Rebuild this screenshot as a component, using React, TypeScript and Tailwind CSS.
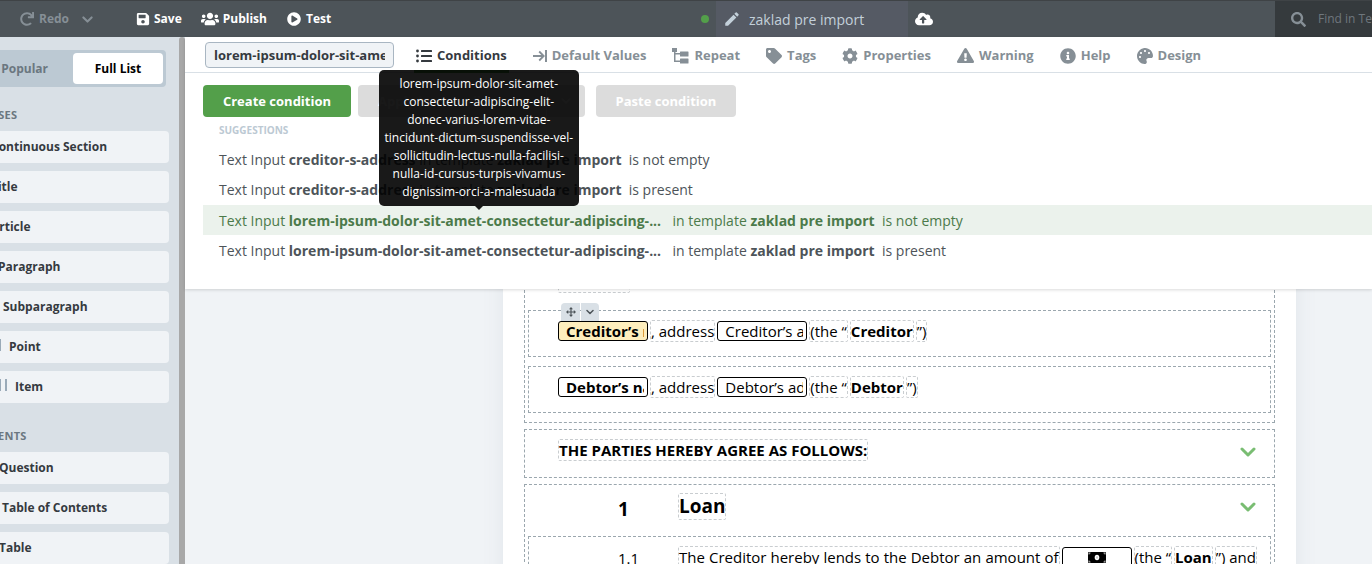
import React from "react";
import {
  FaCog,
  FaCloudUploadAlt,
  FaExclamationTriangle,
  FaInfoCircle,
  FaPalette,
  FaPlayCircle,
  FaRedo,
  FaSave,
  FaSearch,
  FaTag,
  FaUsers,
} from "react-icons/fa";
import { MdEdit } from "react-icons/md";

const VARIABLE_LINES = [
  "lorem-ipsum-dolor-sit-amet-",
  "consectetur-adipiscing-elit-",
  "donec-varius-lorem-vitae-",
  "tincidunt-dictum-suspendisse-vel-",
  "sollicitudin-lectus-nulla-facilisi-",
  "nulla-id-cursus-turpis-vivamus-",
  "dignissim-orci-a-malesuada",
];

function ListIcon() {
  return (
    <svg viewBox="0 0 16 14" className="h-[14px] w-4" fill="currentColor">
      <circle cx="1.500" cy="2" r="1.400" />
      <circle cx="1.500" cy="7" r="1.400" />
      <circle cx="1.500" cy="12" r="1.400" />
      <rect x="5" y="1" width="11" height="2" rx="0.500" />
      <rect x="5" y="6" width="11" height="2" rx="0.500" />
      <rect x="5" y="11" width="11" height="2" rx="0.500" />
    </svg>
  );
}

function DefaultIcon() {
  return (
    <svg viewBox="0 0 14 12" className="h-3 w-[14px]" fill="none" stroke="currentColor" strokeWidth="1.800">
      <path d="M0 6h10.500M6.200 1.500L10.700 6l-4.500 4.500" />
      <path d="M13 0v12" strokeWidth="2" />
    </svg>
  );
}

function TreeIcon() {
  return (
    <svg viewBox="0 0 17 16" className="h-4 w-[17px]" fill="currentColor">
      <rect x="0" y="0" width="5" height="4" />
      <path d="M2 4h1.500v1H8v1.500H3.500v6H8V14H2z" />
      <rect x="8" y="3.500" width="8.500" height="5" rx="0.500" />
      <rect x="8" y="10.500" width="8.500" height="5" rx="0.500" />
    </svg>
  );
}

function Chevron({ className }: { className: string }) {
  return (
    <svg viewBox="0 0 16 10" className={className} fill="none" stroke="currentColor" strokeWidth="3" strokeLinecap="round" strokeLinejoin="round">
      <path d="M2 2l6 6 6-6" />
    </svg>
  );
}

function MoveIcon() {
  return (
    <svg viewBox="0 0 10 10" className="h-[10px] w-[10px]" fill="currentColor">
      <path d="M4.400 2h1.200v6H4.400zM2 4.400h6v1.200H2zM5 0l2 2.200H3zM5 10L3 7.800h4zM0 5l2.200-2v4zM10 5L7.800 7V3z" />
    </svg>
  );
}

function BanknoteIcon() {
  return (
    <svg viewBox="0 0 18 11" className="h-[11px] w-[18px]">
      <rect width="18" height="11" rx="1" fill="#000" />
      <ellipse cx="9" cy="5.500" rx="2.300" ry="2.800" fill="#fff" />
      <path d="M9 4.500v2" stroke="#000" strokeWidth="0.400" />
      <path d="M1 2.500V1h1.500M15.500 1H17v1.500M17 8.500V10h-1.500M2.500 10H1V8.500" fill="none" stroke="#fff" strokeWidth="0.700" />
    </svg>
  );
}

const tabs = [
  { label: "Conditions", icon: <ListIcon />, active: true },
  { label: "Default Values", icon: <DefaultIcon /> },
  { label: "Repeat", icon: <TreeIcon /> },
  { label: "Tags", icon: <FaTag size={16} /> },
  { label: "Properties", icon: <FaCog size={16} /> },
  { label: "Warning", icon: <FaExclamationTriangle size={17} /> },
  { label: "Help", icon: <FaInfoCircle size={16} /> },
  { label: "Design", icon: <FaPalette size={16} /> },
];

const clauses = [
  { label: "Continuous Section", bars: 0, indent: "w-8" },
  { label: "Title", bars: 0, indent: "w-8" },
  { label: "Article", bars: 0, indent: "w-8" },
  { label: "Paragraph", bars: 1, indent: "w-[39px]" },
  { label: "Subparagraph", bars: 2, indent: "w-11" },
  { label: "Point", bars: 3, indent: "w-[50px]" },
  { label: "Item", bars: 4, indent: "w-14" },
];

const elements = [
  { label: "Question", bars: 0, indent: "w-10" },
  { label: "Table of Contents", bars: 0, indent: "w-[43px]" },
  { label: "Table", bars: 0, indent: "w-10" },
];

function Palette({ title, items }: { title: string; items: typeof clauses }) {
  return (
    <section>
      <h2 className="flex h-8 items-center pl-4 text-[11px] font-bold tracking-wide text-[#6b7780]">{title}</h2>
      <ul className="flex flex-col gap-2">
        {items.map((item) => (
          <li key={item.label}>
            <button className="flex h-8 w-full items-center rounded-[4px] bg-[#f0f3f6] pl-[7px] text-[12px] font-bold text-[#353a3f]">
              <span className={`flex shrink-0 justify-end gap-1 pr-2 pb-1 ${item.indent}`}>
                {Array.from({ length: item.bars }, (_, i) => (
                  <span key={i} className="h-3 w-[2px] bg-[#9aaab8]" />
                ))}
              </span>
              {item.label}
            </button>
          </li>
        ))}
      </ul>
    </section>
  );
}

function Suggestion({ name, state, active, tip }: { name: string; state: string; active?: boolean; tip?: boolean }) {
  const long = name.length > 30;
  return (
    <li className={`flex h-[30px] items-center whitespace-pre pl-4 ${active ? "bg-[#ebf2ec] text-[#4b7a4a]" : "text-[#4d5459]"}`}>
      <span>Text Input </span>
      <span className={`relative font-bold ${long ? "w-[380px]" : ""}`}>
        {name}
        {tip && (
          <span
            role="tooltip"
            className="absolute bottom-full left-1/2 z-20 mb-1 w-[200px] -translate-x-1/2 rounded-[5px] bg-black/90 px-1 py-[5px] text-center text-[12px] leading-[18px] font-normal text-white"
          >
            {VARIABLE_LINES.map((line) => (
              <span key={line} className="block">
                {line}
              </span>
            ))}
            <span className="absolute top-full left-1/2 -ml-1 border-x-4 border-t-4 border-x-transparent border-t-black/90" />
          </span>
        )}
      </span>
      <span> in template </span>
      <span className="font-bold">zaklad pre import</span>
      <span>{"  " + state}</span>
    </li>
  );
}

const seg = "rounded-[2px] border border-dashed border-[#c9cdd0]";
const outer = "border border-dashed border-[#9ba7ae]";

function Chip({ children, className = "" }: { children: React.ReactNode; className?: string }) {
  return (
    <button className={`flex h-5 w-[90px] items-center rounded-[3px] border border-black px-[3px] ${className}`}>
      <span className="min-w-0 flex-1 overflow-hidden pl-1 text-left whitespace-nowrap leading-[18px]">{children}</span>
    </button>
  );
}

function Party({ name, address, role, highlight }: { name: string; address: string; role: string; highlight?: boolean }) {
  return (
    <div className={`relative flex h-[47px] items-start pl-[29px] pt-[9px] ${outer}`}>
      {highlight && (
        <div className="absolute -top-2 left-8 flex h-[18px] gap-px overflow-hidden rounded-t-[4px] text-[#4d5459]">
          <button aria-label="Move" className="flex w-[19px] items-center justify-center bg-[#d9e0e6]">
            <MoveIcon />
          </button>
          <button aria-label="More" className="flex w-[18px] items-center justify-center bg-[#d9e0e6]">
            <Chevron className="h-[6px] w-2" />
          </button>
        </div>
      )}
      <div className="flex items-center gap-[2px] leading-5">
        <Chip className={`font-bold ${highlight ? "bg-[#feeebd]" : ""}`}>{name}</Chip>
        <span className={seg}>, address</span>
        <Chip>{address}</Chip>
        <span className={seg}>(the “</span>
        <span className={`font-bold ${seg}`}>{role}</span>
        <span className={seg}>”)</span>
      </div>
    </div>
  );
}

export default function App() {
  return (
    <div className="flex h-screen flex-col overflow-hidden bg-[#f0f3f6] font-['Open_Sans',sans-serif] text-[14px]">
      <header className="flex h-[37px] shrink-0 items-center border-t border-[#3f4346] bg-[#4d5459] text-[12px] font-bold text-white">
        <button className="flex w-[62px] items-center gap-[5px] pl-5 text-[#868f96]">
          <FaRedo size={14} className="shrink-0" />
          Redo
        </button>
        <button aria-label="Redo history" className="ml-5 text-[#868f96]">
          <Chevron className="h-[7px] w-[11px]" />
        </button>
        <button className="ml-[43px] flex items-center gap-1">
          <FaSave size={14} />
          Save
        </button>
        <button className="ml-[19px] flex items-center gap-1">
          <FaUsers size={18} />
          Publish
        </button>
        <button className="ml-5 flex items-center gap-[5px]">
          <FaPlayCircle size={14} />
          Test
        </button>
        <div className="flex flex-1 items-center justify-end self-stretch">
          <span className="mr-[7px] h-2 w-2 rounded-full bg-[#539f4a]" />
          <div className="flex w-[192px] items-center gap-2 self-stretch bg-[#555a64] pl-[7px] text-[14px] font-normal text-[#c3d0da]">
            <MdEdit size={18} />
            zaklad pre import
          </div>
          <button aria-label="Upload" className="ml-[7px] mr-[342px]">
            <FaCloudUploadAlt size={18} />
          </button>
        </div>
        <label className="flex w-[97px] items-center gap-3 self-stretch overflow-hidden bg-[#353a3d] pl-4 text-[#868f96]">
          <FaSearch size={15} className="shrink-0" />
          <input aria-label="Find" placeholder="Find in Template" className="w-40 shrink-0 bg-transparent text-[12px] font-normal outline-none placeholder:text-[#6f777d]" />
        </label>
      </header>

      <div className="flex min-h-0 flex-1">
        <aside className="flex w-[185px] shrink-0 justify-end overflow-hidden bg-[#d9e0e6]">
          <div className="w-[227px] shrink-0 pr-[10px] pt-[13px]">
            <div className="mr-[3px] flex h-[37px] rounded-[4px] bg-[#bcc9d3] p-[3px] text-[12px] font-bold">
              <button className="flex-1 pr-[25px] text-right text-[#6b7780]">Popular</button>
              <button className="w-[90px] rounded-[4px] bg-white text-black">Full List</button>
            </div>
            <div className="flex flex-col gap-[17px] pt-3">
              <Palette title="CLAUSES" items={clauses} />
              <Palette title="ELEMENTS" items={elements} />
            </div>
          </div>
          <div className="w-[6px] shrink-0 rounded-t-[3px] bg-[#a8a8a8]" />
        </aside>

        <main className="flex min-w-0 flex-1 flex-col">
          <div className="relative z-10 bg-white shadow-[0_1px_3px_rgba(0,0,0,0.15)]">
            <nav className="flex h-9 items-stretch border-b border-[#d9e0e6] pl-5">
              <input
                aria-label="Name"
                defaultValue={VARIABLE_LINES.join("")}
                className="mt-[5px] mr-[20px] h-[26px] w-[189px] rounded-[4px] border border-[#a9b6c2] bg-[#f0f3f6] px-2 text-[13px] font-bold text-[#353a3f] outline-none"
              />
              <div className="flex gap-[22px]">
                {tabs.map((t) => (
                  <button
                    key={t.label}
                    className={`-mb-px flex items-center gap-[5px] border-b-[3px] px-[2px] pt-1 text-[13px] font-bold ${
                      t.active ? "border-[#539f4a] text-[#353a3f]" : "border-transparent text-[#868f96]"
                    }`}
                  >
                    {t.icon}
                    {t.label}
                  </button>
                ))}
              </div>
            </nav>
            <div className="pb-[23px] pl-[18px] pt-3">
              <div className="flex text-[13px] font-bold text-white">
                <button className="h-8 w-[148px] rounded-[4px] bg-[#539f4a] pt-px">Create condition</button>
                <button className="ml-[7px] h-8 w-[188px] rounded-l-[4px] bg-[#dcdcdc] pl-5 pt-px text-left">Apply last condition</button>
                <button aria-label="More conditions" className="ml-px flex h-8 w-[38px] items-center justify-center rounded-r-[4px] bg-[#dcdcdc]">
                  <Chevron className="h-[6px] w-[10px]" />
                </button>
                <button className="ml-[11px] h-8 w-[140px] rounded-[4px] bg-[#dcdcdc] pt-px">Paste condition</button>
              </div>
              <h3 className="flex h-[27px] items-center pl-4 text-[10px] font-bold text-[#bcc9d3]">SUGGESTIONS</h3>
              <ul className="flex h-[122px] flex-col justify-between">
                <Suggestion name="creditor-s-address" state="is not empty" />
                <Suggestion name="creditor-s-address" state="is present" />
                <Suggestion name="lorem-ipsum-dolor-sit-amet-consectetur-adipiscing-..." state="is not empty" active tip />
                <Suggestion name="lorem-ipsum-dolor-sit-amet-consectetur-adipiscing-..." state="is present" />
              </ul>
            </div>
          </div>

          <div className="min-h-0 flex-1 overflow-hidden">
            <article className="-mt-6 ml-[318px] flex w-[793px] flex-col gap-[6px] bg-white px-[21px] text-[15px] text-black shadow-[0_0_20px_rgba(120,140,160,0.12)]">
              <section className={`flex flex-col gap-[9px] px-[3px] pb-[9px] ${outer}`}>
                <div className="flex h-[35px] items-end pl-[30px]">
                  <h2 className={`mb-2 font-bold leading-5 ${seg}`}>Between:</h2>
                </div>
                <Party name="Creditor’s name" address="Creditor’s address" role="Creditor" highlight />
                <Party name="Debtor’s name" address="Debtor’s address" role="Debtor" />
              </section>

              <section className={`flex h-[49px] items-start justify-between pl-[33px] pr-[18px] pt-[9px] ${outer}`}>
                <h2 className={`font-bold leading-5 ${seg}`}>THE PARTIES HEREBY AGREE AS FOLLOWS:</h2>
                <button aria-label="Expand parties" className="mt-2 text-[#79bd72]">
                  <Chevron className="h-[10px] w-4" />
                </button>
              </section>

              <section className={`flex flex-col px-[3px] ${outer}`}>
                <div className="flex h-[51px] items-start pl-[90px] pr-[15px] pt-2 text-[19px] font-bold">
                  <span className="w-[60px] leading-8">1</span>
                  <h2 className={`leading-[25px] ${seg}`}>Loan</h2>
                  <button aria-label="Expand loan" className="ml-auto mt-[9px] text-[#79bd72]">
                    <Chevron className="h-[10px] w-4" />
                  </button>
                </div>
                <div className={`flex h-[70px] items-start pl-[89px] pr-[13px] pt-[9px] ${outer}`}>
                  <span className="w-[60px] shrink-0 leading-6">1.1</span>
                  <p className="flex flex-1 items-center gap-[2px] leading-5">
                    <span className={`flex-1 [text-align-last:justify] ${seg}`}>The Creditor hereby lends to the Debtor an amount of</span>
                    <button aria-label="Amount" className="flex h-5 w-[70px] items-center justify-center rounded-[3px] border border-black">
                      <BanknoteIcon />
                    </button>
                    <span className={seg}>(the “</span>
                    <span className={`font-bold ${seg}`}>Loan</span>
                    <span className={seg}>”) and</span>
                  </p>
                </div>
              </section>
            </article>
          </div>
        </main>
      </div>
    </div>
  );
}
